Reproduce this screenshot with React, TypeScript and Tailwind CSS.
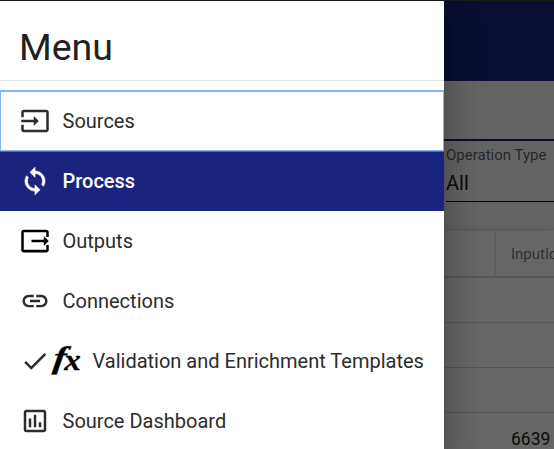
import React from "react";
import { MdCheck, MdInput, MdLink, MdOutlineAssessment } from "react-icons/md";

function SyncIcon() {
  return (
    <svg viewBox="0 0 24 24" className="size-[30px] shrink-0" fill="currentColor" stroke="currentColor" strokeWidth={0.5}>
      <path d="M12 4V1L8 5l4 4V6c3.31 0 6 2.69 6 6 0 1.01-.25 1.97-.7 2.8l1.46 1.46A7.93 7.93 0 0020 12c0-4.42-3.58-8-8-8zm0 14c-3.31 0-6-2.69-6-6 0-1.01.25-1.97.7-2.8L5.24 7.74A7.93 7.93 0 004 12c0 4.42 3.58 8 8 8v3l4-4-4-4v3z" />
    </svg>
  );
}

function OutputIcon() {
  return (
    <svg viewBox="0 0 24 24" className="size-[30px] shrink-0 text-black" fill="currentColor">
      <path d="M21 2.9H3c-1.1 0-2 .9-2 2v14.2c0 1.1.9 2 2 2h18c1.1 0 2-.9 2-2v-3.9h-2v3.8H3V5h18v3.8h2V4.9c0-1.1-.9-2-2-2z" />
      <path d="M19 16l4-4-4-4v3H9.2v2H19z" />
    </svg>
  );
}

function FxIcon() {
  return (
    <span className="relative block h-[30px] w-[30px] shrink-0 font-['Liberation_Serif',serif] font-bold italic leading-none text-black">
      <span className="absolute left-[5px] top-[-4px] -skew-x-6 scale-x-125 text-[31px] [-webkit-text-stroke:0.3px_black]">f</span>
      <span className="absolute left-[15px] top-[-1px] scale-x-110 text-[30px] [-webkit-text-stroke:0.3px_black]">x</span>
    </span>
  );
}

const icon = "size-[30px] shrink-0";

const items = [
  { label: "Sources", icons: <MdInput className={icon} />, style: "h-[61px] border border-t-2 border-[#86b4fa] text-[#2c2c2c]" },
  { label: "Process", icons: <SyncIcon />, style: "h-[60px] border border-t-[#3f6fd0] border-[#1a237e] bg-[#1a237e] font-medium text-white" },
  { label: "Outputs", icons: <OutputIcon />, style: "h-[60px] border border-transparent text-[#2c2c2c]" },
  { label: "Connections", icons: <MdLink className={icon} />, style: "h-[60px] border border-transparent text-[#2c2c2c]" },
  { label: "Validation and Enrichment Templates", icons: <><MdCheck className={icon} /><FxIcon /></>, style: "h-[60px] border border-transparent text-[#2c2c2c]" },
  { label: "Source Dashboard", icons: <MdOutlineAssessment className={icon} />, style: "h-[60px] border border-transparent text-[#2c2c2c]" },
];

function Page() {
  return (
    <div className="flex h-full flex-col bg-[#fafafa] pl-[444px] text-[#212121]">
      <div className="h-20 shrink-0 bg-[#1a237e]" />
      <div className="h-[58px] shrink-0 border-b border-[#f0f0f0]" />
      <div className="h-[2px] shrink-0 bg-[#1a237e]" />
      <div className="flex h-[90px] shrink-0 flex-col pl-[2px]">
        <div className="mt-[5px] whitespace-nowrap text-[15px] leading-[18px] text-black/65">Operation Type</div>
        <div className="mt-[6px] h-8 border-b border-black text-[20px] leading-[26px]">All</div>
      </div>
      <div className="grow bg-white shadow-[0_1px_10px_rgba(0,0,0,0.2)]">
        <div className="flex h-[47px] border-b-2 border-[#dadada]">
          <div className="w-[52px] shrink-0 border-r border-[#e3e3e3]" />
          <div className="pl-[15px] text-[15px] leading-[46px] text-black/55">InputId</div>
        </div>
        <div className="h-[45px] border-b border-[#d5d5d5]" />
        <div className="h-[45px] border-b border-[#d5d5d5]" />
        <div className="h-[45px] border-b border-[#d5d5d5]" />
        <div className="pl-[67px] pt-[3px] text-[17.5px] leading-[46px]">6639</div>
      </div>
    </div>
  );
}

export default function App() {
  return (
    <div className="relative h-[449px] w-[554px] overflow-hidden border-t border-[#191919] font-[Roboto,sans-serif]">
      <Page />
      <div className="absolute inset-0 bg-black/60" />
      <aside className="absolute inset-y-0 left-0 w-[444px] bg-white shadow-[0_10px_13px_-6px_rgba(0,0,0,0.2),0_20px_30px_3px_rgba(0,0,0,0.14),0_8px_38px_6px_rgba(0,0,0,0.12)]">
        <h1 className="h-20 border-b border-[#e0e0e0] pl-[19px] pt-[22px] text-[37.5px] leading-[49px] text-[#212121]">Menu</h1>
        <nav className="mt-[9px]">
          {items.map((item) => (
            <a key={item.label} className={`flex items-center pl-[19px] text-[20px] ${item.style}`}>
              {item.icons}
              <span className="ml-[12.5px] whitespace-nowrap">{item.label}</span>
            </a>
          ))}
        </nav>
      </aside>
    </div>
  );
}
